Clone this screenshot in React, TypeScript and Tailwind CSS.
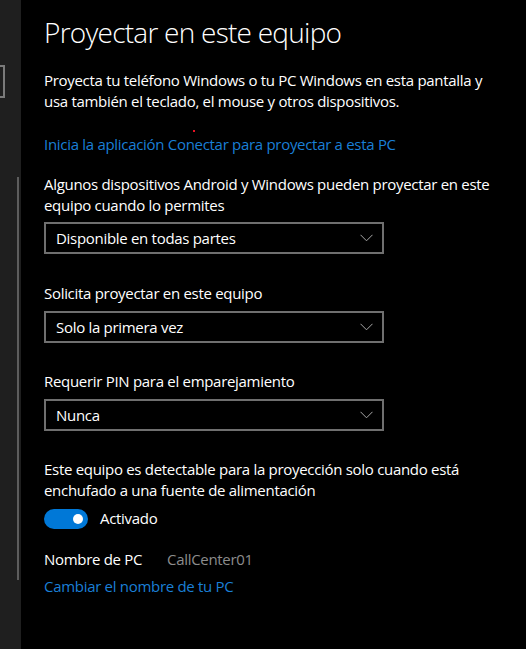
import React from 'react';

const font = { fontFamily: '"Open Sans", "Noto Sans", sans-serif' };

function Select({ value, gap }: { value: string; gap: string }) {
  return (
    <div className={`${gap} flex h-[32px] w-[340px] items-center justify-between border-2 border-[#6f6f6f] pl-[10px] pr-[8px] text-[15px] tracking-[-0.3px] text-white`}>
      <span>{value}</span>
      <svg width="13" height="8" viewBox="0 0 13 8" className="mr-[1px]">
        <polyline points="0.5,0.8 6.5,6.8 12.5,0.8" fill="none" stroke="#a8a8a8" strokeWidth="1" />
      </svg>
    </div>
  );
}

export default function App() {
  return (
    <div className="flex h-[649px] w-[526px] overflow-hidden bg-black" style={font}>
      <div className="flex w-[21px] shrink-0 flex-col bg-[#1f1f1f]">
        <div className="mt-[65px] h-[33px] w-[5px] border-2 border-l-0 border-[#7a7a7a]" />
        <div className="ml-[17px] mt-[79px] h-[403px] w-[2px] bg-[#5d5d5d]" />
      </div>

      <div className="relative flex-1 pl-[23px] text-[15px] leading-[21px] tracking-[-0.3px] text-white">
        <h1 className="mt-[14px] text-[28px] font-light leading-[36px] tracking-[-0.75px]">Proyectar en este equipo</h1>

        <p className="mt-[20px]">
          Proyecta tu teléfono Windows o tu PC Windows en esta pantalla y
          <br />
          usa también el teclado, el mouse y otros dispositivos.
        </p>

        <span className="absolute left-[172px] top-[130px] h-[2px] w-[2px] bg-[#e81123]" />

        <p className="mt-[22px] text-[#1a7fd6]">Inicia la aplicación Conectar para proyectar a esta PC</p>

        <p className="mt-[19px]">
          Algunos dispositivos Android y Windows pueden proyectar en este
          <br />
          equipo cuando lo permites
        </p>
        <Select value="Disponible en todas partes" gap="mt-[6px]" />

        <p className="mt-[29px]">Solicita proyectar en este equipo</p>
        <Select value="Solo la primera vez" gap="mt-[7px]" />

        <p className="mt-[28px]">Requerir PIN para el emparejamiento</p>
        <Select value="Nunca" gap="mt-[7px]" />

        <p className="mt-[28px]">
          Este equipo es detectable para la proyección solo cuando está
          <br />
          enchufado a una fuente de alimentación
        </p>

        <div className="mt-[7px] flex items-center">
          <div className="flex h-[20px] w-[44px] items-center justify-end rounded-full bg-[#0078d7] pr-[5px]">
            <div className="h-[10px] w-[10px] rounded-full bg-white" />
          </div>
          <span className="ml-[12px]">Activado</span>
        </div>

        <div className="mt-[20px] flex">
          <span className="w-[123px]">Nombre de PC</span>
          <span className="text-[#8c8c8c]">CallCenter01</span>
        </div>
        <p className="mt-[6px] text-[#1a7fd6]">Cambiar el nombre de tu PC</p>
      </div>
    </div>
  );
}
